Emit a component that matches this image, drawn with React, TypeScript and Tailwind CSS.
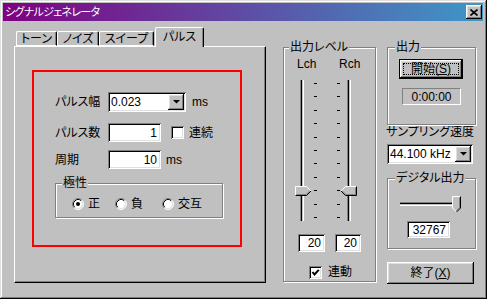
import type { ReactNode } from 'react';

const sunken =
  'shadow-[inset_1px_1px_0_#808080,inset_-1px_-1px_0_#ffffff,inset_2px_2px_0_#000000,inset_-2px_-2px_0_#dfdfdf]';
const raised =
  'shadow-[inset_-1px_-1px_0_#000000,inset_1px_1px_0_#ffffff,inset_-2px_-2px_0_#808080,inset_2px_2px_0_#dfdfdf]';
const etched = 'border border-[#808080] shadow-[inset_1px_1px_0_#ffffff,1px_1px_0_#ffffff]';

function Group({
  label,
  labelClass,
  className,
  children,
}: {
  label: string;
  labelClass: string;
  className: string;
  children?: ReactNode;
}) {
  return (
    <div className={`relative ${etched} ${className}`}>
      <span className={`absolute -top-[8px] bg-[#c0c0c0] px-[1px] leading-[14px] ${labelClass}`}>{label}</span>
      {children}
    </div>
  );
}

function Edit({ className, children }: { className: string; children: ReactNode }) {
  return (
    <div className={`bg-white ${sunken} flex items-center justify-end pr-[4px] ${className}`}>{children}</div>
  );
}

function Arrow() {
  return (
    <svg width="7" height="4" viewBox="0 0 7 4">
      <polygon points="0,0 7,0 3.5,3.6" fill="#000" />
    </svg>
  );
}

function Combo({ className, value }: { className: string; value: string }) {
  return (
    <div className={`bg-white ${sunken} flex items-stretch p-[2px] ${className}`}>
      <span className="flex-1 pl-[1px] flex items-center">{value}</span>
      <div className={`w-[16px] bg-[#c0c0c0] ${raised} flex items-center justify-center`}>
        <Arrow />
      </div>
    </div>
  );
}

function Radio({ checked }: { checked?: boolean }) {
  return (
    <svg width="12" height="12" viewBox="0 0 12 12" className="shrink-0">
      <circle cx="6" cy="6" r="5" fill="#fff" />
      <path d="M2.11 9.89 A5.5 5.5 0 0 1 9.89 2.11" fill="none" stroke="#808080" />
      <path d="M9.89 2.11 A5.5 5.5 0 0 1 2.11 9.89" fill="none" stroke="#fff" />
      <path d="M2.82 9.18 A4.5 4.5 0 0 1 9.18 2.82" fill="none" stroke="#000" />
      <path d="M9.18 2.82 A4.5 4.5 0 0 1 2.82 9.18" fill="none" stroke="#dfdfdf" />
      {checked && <circle cx="6" cy="6" r="2" fill="#000" />}
    </svg>
  );
}

function Check({ checked }: { checked?: boolean }) {
  return (
    <div className={`w-[13px] h-[13px] bg-white ${sunken} shrink-0 flex items-center justify-center`}>
      {checked && (
        <svg width="13" height="13" viewBox="0 0 13 13">
          <polyline points="3.5,6 5.5,8.5 9.8,3.8" fill="none" stroke="#000" strokeWidth="2" />
        </svg>
      )}
    </div>
  );
}

function VThumb({ dir }: { dir: 'right' | 'left' }) {
  const pts = dir === 'right' ? '0.5,0.5 11.5,0.5 16,5 11.5,9.5 0.5,9.5' : '16.5,0.5 5.5,0.5 1,5 5.5,9.5 16.5,9.5';
  return (
    <svg width="17" height="10" viewBox="0 0 17 10">
      <polygon points={pts} fill="#c0c0c0" />
      {dir === 'right' ? (
        <>
          <polyline points="0.5,9.5 0.5,0.5 11.5,0.5 16,5" fill="none" stroke="#fff" />
          <polyline points="16,5 11.5,9.5 0.5,9.5" fill="none" stroke="#000" />
          <polyline points="1.5,8.5 11,8.5 14.8,5" fill="none" stroke="#808080" />
        </>
      ) : (
        <>
          <polyline points="16.5,0.5 5.5,0.5 1,5" fill="none" stroke="#fff" />
          <polyline points="1,5 5.5,9.5 16.5,9.5 16.5,0.5" fill="none" stroke="#000" />
          <polyline points="2.2,5 6,8.5 15.5,8.5 15.5,1.5" fill="none" stroke="#808080" />
        </>
      )}
    </svg>
  );
}

function HThumb() {
  return (
    <svg width="9" height="17" viewBox="0 0 9 17">
      <polygon points="0.5,0.5 8.5,0.5 8.5,12 4.5,16 0.5,12" fill="#c0c0c0" />
      <polyline points="4.5,16 0.5,12 0.5,0.5 8.5,0.5" fill="none" stroke="#fff" />
      <polyline points="8.5,0.5 8.5,12 4.5,16" fill="none" stroke="#000" />
      <polyline points="7.5,1.5 7.5,11.6 4.5,14.6" fill="none" stroke="#808080" />
    </svg>
  );
}

function Ticks() {
  return (
    <div className="w-[3px] h-[141px] py-[3px] flex flex-col justify-between">
      {Array.from({ length: 11 }).map((_, i) => (
        <div key={i} className="h-[1px] bg-black" />
      ))}
    </div>
  );
}

function Track({ dir }: { dir: 'right' | 'left' }) {
  return (
    <div className="relative w-[4px] h-[141px] border-l border-l-[#808080] border-r border-r-white bg-black">
      <div className="absolute top-0 bottom-0 right-0 w-[1px] bg-[#c0c0c0]" />
      <div className={`absolute top-[106px] ${dir === 'right' ? '-left-[6px]' : '-left-[8px]'}`}>
        <VThumb dir={dir} />
      </div>
    </div>
  );
}

export default function App() {
  return (
    <div
      className={`w-[487px] h-[299px] bg-[#c0c0c0] pt-[3px] pl-[3px] pr-[4px] text-[12px] leading-[14px] text-black font-['Liberation_Sans','Noto_Sans_CJK_JP',sans-serif] [font-feature-settings:'palt'] shadow-[inset_-1px_-1px_0_#000000,inset_1px_1px_0_#dfdfdf,inset_-2px_-2px_0_#808080,inset_2px_2px_0_#ffffff]`}
    >
      {/* title bar */}
      <div className="h-[18px] flex items-center bg-[linear-gradient(90deg,#800080,#3d98c8)]">
        <span className="pl-[2px] text-white flex-1 text-[11px] tracking-[-0.7px]">シグナルジェネレータ</span>
        <div className={`w-[16px] h-[14px] mr-[1px] bg-[#c0c0c0] ${raised} flex items-center justify-center`}>
          <svg width="8" height="7" viewBox="0 0 8 7">
            <path d="M0.5 0.5 L7.5 6.5 M7.5 0.5 L0.5 6.5" stroke="#000" strokeWidth="1.6" />
          </svg>
        </div>
      </div>

      <div className="flex pl-[11px] pt-[6px]">
        {/* tab control */}
        <div className="w-[252px] flex flex-col">
          <div className="h-[19px] flex items-end pl-[2px]">
            {[
              ['トーン', 'w-[41px]'],
              ['ノイズ', 'w-[42px]'],
              ['スイープ', 'w-[55px]'],
            ].map(([t, w]) => (
              <div
                key={t}
                className={`${w} h-[15px] border-t border-l border-r border-t-white border-l-white border-r-black rounded-t-[2px] shadow-[inset_-1px_0_0_#808080] flex items-center justify-center border-b border-b-white pt-[1px]`}
              >
                {t}
              </div>
            ))}
            <div className="relative z-10 ml-[1px] w-[49px] h-[20px] -mb-[1px] bg-[#c0c0c0] border-t border-l border-r border-t-white border-l-white border-r-black rounded-t-[2px] shadow-[inset_-1px_0_0_#808080] flex items-start pt-[2px] justify-center">
              パルス
            </div>
          </div>
          <div className="h-[237px] border border-t-white border-l-white border-r-black border-b-black shadow-[inset_-1px_-1px_0_#808080] pl-[17px] pt-[23px]">
            <div className="w-[210px] h-[177px] border-2 border-[#ff0000] pl-[21px] pt-[20px]">
              <div className="flex items-center h-[20px]">
                <span className="w-[53px]">パルス幅</span>
                <Combo className="w-[78px] h-[20px]" value="0.023" />
                <span className="ml-[6px]">ms</span>
              </div>
              <div className="flex items-center h-[19px] mt-[11px]">
                <span className="w-[53px]">パルス数</span>
                <Edit className="w-[53px] h-[19px]">1</Edit>
                <div className="ml-[10px]">
                  <Check />
                </div>
                <span className="ml-[5px]">連続</span>
              </div>
              <div className="flex items-center h-[19px] mt-[8px]">
                <span className="w-[53px]">周期</span>
                <Edit className="w-[53px] h-[19px]">10</Edit>
                <span className="ml-[5px]">ms</span>
              </div>
              <Group label="極性" labelClass="left-[6px]" className="mt-[14px] w-[168px] h-[35px]">
                <div className="flex items-center pl-[16px] pt-[13px]">
                  <Radio checked />
                  <span className="ml-[4px]">正</span>
                  <span className="ml-[15px]">
                    <Radio />
                  </span>
                  <span className="ml-[4px]">負</span>
                  <span className="ml-[19px]">
                    <Radio />
                  </span>
                  <span className="ml-[4px]">交互</span>
                </div>
              </Group>
            </div>
          </div>
        </div>

        {/* output level */}
        <Group label="出力レベル" labelClass="left-[5px]" className="ml-[17px] mt-[20px] w-[93px] h-[235px]">
          <div className="flex pl-[13px] pt-[9px] h-[32px]">
            <span className="w-[42px]">Lch</span>
            <span>Rch</span>
          </div>
          <div className="flex pl-[16px]">
            <Track dir="right" />
            <div className="ml-[10px]">
              <Ticks />
            </div>
            <div className="ml-[20px]">
              <Ticks />
            </div>
            <div className="ml-[7px]">
              <Track dir="left" />
            </div>
          </div>
          <div className="flex pl-[14px] mt-[13px]">
            <Edit className="w-[27px] h-[18px]">20</Edit>
            <Edit className="ml-[10px] w-[26px] h-[18px]">20</Edit>
          </div>
          <div className="flex items-center pl-[25px] mt-[13px]">
            <Check checked />
            <span className="ml-[6px]">連動</span>
          </div>
        </Group>

        {/* right column */}
        <div className="ml-[11px] mt-[20px] w-[90px] flex flex-col">
          <Group label="出力" labelClass="left-[7px]" className="w-[89px] h-[78px]">
            <div className="flex flex-col items-start pl-[11px] pt-[11px]">
              <div className="w-[64px] h-[20px] border border-black">
                <div className={`w-full h-full ${raised} p-[3px]`}>
                  <div className="w-full h-full border border-dotted border-black flex items-center justify-center">
                    開始(<span className="underline">S</span>)
                  </div>
                </div>
              </div>
              <div className="ml-[3px] mt-[9px] w-[59px] h-[17px] border border-t-[#808080] border-l-[#808080] border-b-white border-r-white flex items-center justify-center">
                0:00:00
              </div>
            </div>
          </Group>
          <div className="h-[12px] leading-[12px] -ml-[1px] mt-[1px] whitespace-nowrap">サンプリング速度</div>
          <Combo className="mt-[6px] w-[86px] h-[20px]" value="44.100 kHz" />
          <Group label="デジタル出力" labelClass="left-[7px]" className="mt-[14px] w-[89px] h-[71px]">
            <div className="pl-[12px] pt-[17px]">
              <div className="relative h-[17px] w-[60px]">
                <div className="pt-[6px]">
                  <div className="w-[54px] h-[4px] border-t border-t-[#808080] border-b border-b-white bg-black">
                    <div className="h-[1px] mt-[1px] bg-[#c0c0c0]" />
                  </div>
                </div>
                <div className="absolute left-[52px] top-0">
                  <HThumb />
                </div>
              </div>
              <Edit className="ml-[7px] mt-[8px] w-[43px] h-[17px]">32767</Edit>
            </div>
          </Group>
          <div className={`mt-[13px] w-[87px] h-[22px] ${raised} flex items-center justify-center`}>
            終了(<span className="underline">X</span>)
          </div>
        </div>
      </div>
    </div>
  );
}
